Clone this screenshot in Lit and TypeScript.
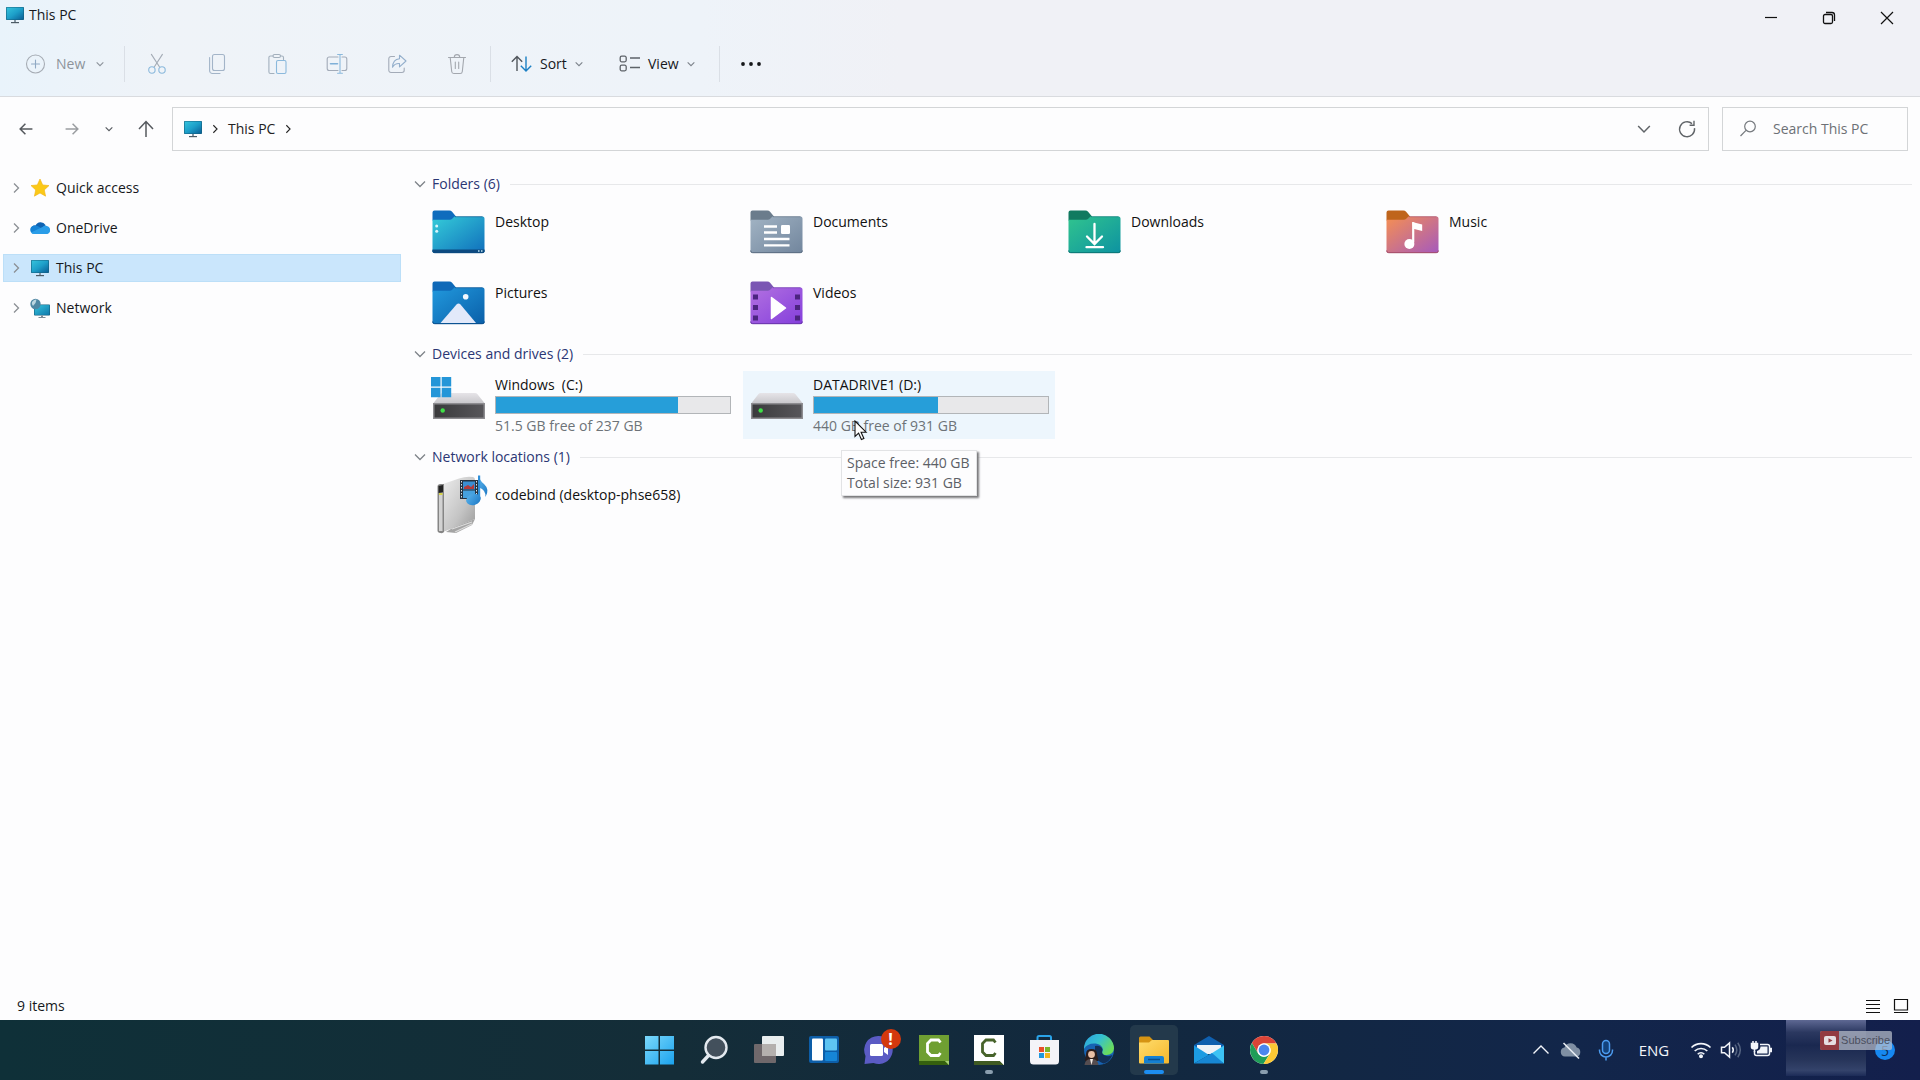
import { LitElement, html, svg, css, nothing, TemplateResult, SVGTemplateResult } from "lit";
import { customElement } from "lit/decorators.js";
import { classMap } from "lit/directives/class-map.js";
import { styleMap } from "lit/directives/style-map.js";

interface FolderItem {
  name: string;
  tab: string;
  from: string;
  to: string;
  edge: string;
  art: SVGTemplateResult;
}

interface Drive {
  name: string;
  free: string;
  total: string;
  used: number;
  system: boolean;
  hovered: boolean;
}

const monitor = (id: string) => html`
  <svg class="i20" viewBox="0 0 20 20" aria-hidden="true">
    <defs>
      <linearGradient id=${id} x1="0" y1="0" x2="1" y2="1">
        <stop offset="0" stop-color="#35c3dc" />
        <stop offset="0.5" stop-color="#1d9fc9" />
        <stop offset="1" stop-color="#0a5f96" />
      </linearGradient>
    </defs>
    <rect x="1" y="2" width="18" height="13" rx="0.8" fill="#14607f" />
    <rect x="1.6" y="2.6" width="16.8" height="11.8" rx="0.4" fill=${`url(#${id})`} />
    <path d="M9 15h2v2H9z" fill="#8796a2" />
    <path d="M6 17h8v1.2H6z" fill="#4d5b66" />
  </svg>
`;

const chevron = (d: string, cls: string) => html`
  <svg class=${cls} viewBox="0 0 12 12" fill="none" stroke="currentColor" stroke-width="1.3" aria-hidden="true">
    <path d=${d} />
  </svg>
`;
const DOWN = "M2 4l4 4 4-4";
const RIGHT = "M4 1.5l4.5 4.5L4 10.5";

const line = (body: SVGTemplateResult) => html`
  <svg class="i22" viewBox="0 0 22 22" fill="none" stroke="currentColor" stroke-width="1.1" stroke-linecap="round" stroke-linejoin="round" aria-hidden="true">${body}</svg>
`;

const editTools: { label: string; icon: SVGTemplateResult }[] = [
  {
    label: "Cut",
    icon: svg`<path d="M5.4 1.4l8 12.4M16.4 1.4l-8 12.4" stroke="#a3abb5"/><circle cx="5.9" cy="17" r="3.2" stroke="#8bb9dc"/><circle cx="16" cy="17" r="3.2" stroke="#8bb9dc"/>`,
  },
  {
    label: "Copy",
    icon: svg`<rect x="6.5" y="1.5" width="12" height="16" rx="2" stroke="#a3b4c8"/><path d="M3.6 4.5v13.2a2.8 2.8 0 0 0 2.8 2.8H14" stroke="#a3b4c8"/>`,
  },
  {
    label: "Paste",
    icon: svg`<path d="M8 20.5H4.5a1.6 1.6 0 0 1-1.6-1.6V4.6A1.6 1.6 0 0 1 4.5 3H7M14.5 3h1.4a1.6 1.6 0 0 1 1.6 1.6V6.5" stroke="#a3b0bd"/><rect x="7" y="1.5" width="7.5" height="3" rx="1.5" stroke="#a3b0bd"/><rect x="10.5" y="7.5" width="9.5" height="13" rx="1.5" stroke="#8bb9dc"/>`,
  },
  {
    label: "Rename",
    icon: svg`<path d="M12 4H3.2A2 2 0 0 0 1.2 6v9.5a2 2 0 0 0 2 2H12M16 4h2.8a2 2 0 0 1 2 2v9.5a2 2 0 0 1-2 2H16" stroke="#a3abb8"/><path d="M4.5 10.7h7" stroke="#7fb0d8" stroke-width="1.6"/><path d="M14 1.5v18.5M11.6 1.5h4.8M11.6 20.2h4.8" stroke="#8bb9dc"/>`,
  },
  {
    label: "Share",
    icon: svg`<path d="M8.5 3.5H5a2.2 2.2 0 0 0-2.2 2.2v11.6A2.2 2.2 0 0 0 5 19.5h11a2.2 2.2 0 0 0 2.2-2.2V15" stroke="#a3abb8"/><path d="M13.5 2.2l6.5 5.8-6.5 5.8v-3.3c-3.5-.2-5.6 1.2-7 3.7.2-4.8 2.8-8.1 7-8.5z" stroke="#93aecb"/>`,
  },
  {
    label: "Delete",
    icon: svg`<path d="M2.5 4.5h17M4.2 4.5l1.5 14a2.2 2.2 0 0 0 2.2 2h6.2a2.2 2.2 0 0 0 2.2-2l1.5-14M8.3 4.3a2.7 2.7 0 0 1 5.4 0M9.3 9v6.5M12.7 9v6.5" stroke="#a3a7ae"/>`,
  },
];

const folders: FolderItem[] = [
  {
    name: "Desktop", tab: "#0f6cbd", from: "#31c3d6", to: "#1273bd", edge: "#0b4f86",
    art: svg`<path d="M.5 39.5h52v1.5a2 2 0 0 1-2 2h-48a2 2 0 0 1-2-2z" fill="#0d4a80"/><circle cx="4.7" cy="16" r="1.5" fill="#d8f6fb"/><circle cx="4.7" cy="21.2" r="1.5" fill="#d8f6fb"/><path d="M46 41h1.5M49 41h1.5" stroke="#bfe6f5" stroke-width="1.5"/>`,
  },
  {
    name: "Documents", tab: "#6b7c8c", from: "#9dafc0", to: "#74889f", edge: "#5a6c80",
    art: svg`<path d="M14 16.5h13M14 22.5h13M14 29h25.5M14 35.3h25.5" stroke="#fff" stroke-width="2.3"/><rect x="31" y="15" width="9" height="9" rx="1.2" fill="#fff"/>`,
  },
  {
    name: "Downloads", tab: "#117a60", from: "#2dbf90", to: "#0f95a0", edge: "#0c7373",
    art: svg`<path d="M26.5 14v20M19 26.5l7.500 7.500 7.500-7.500M18.500 37.200H35" fill="none" stroke="#fff" stroke-width="2.3" stroke-linecap="round"/>`,
  },
  {
    name: "Music", tab: "#bf651c", from: "#ee8a5c", to: "#a95cb8", edge: "#a34d68",
    art: svg`<path d="M27.2 12.200v20" stroke="#fff" stroke-width="2.2"/><path d="M26.2 12l10 2.500v6.500l-9-2.300z" fill="#fff"/><circle cx="23.4" cy="34" r="5" fill="#fff"/>`,
  },
  {
    name: "Pictures", tab: "#0f69b8", from: "#1f93d8", to: "#0b62ab", edge: "#0a4d8a",
    art: svg`<path d="M8.5 42l16-18.500q2-2 4 0L44 42z" fill="#e2e9fa"/><circle cx="33.7" cy="15.7" r="2.8" fill="#f2f8ff"/>`,
  },
  {
    name: "Videos", tab: "#7a56b3", from: "#ae6ce0", to: "#8641dc", edge: "#6834a8",
    art: svg`<path d="M3 13.5h5v5H3zM3 24h5v5H3zM3 34.5h5v5H3zM45 13.5h5v5h-5zM45 24h5v5h-5zM45 34.5h5v5h-5z" fill="#4c2480"/><path d="M21.5 16.5l14 10.500-14 10.500z" fill="#fff" stroke="#fff" stroke-width="1.5" stroke-linejoin="round"/>`,
  },
];

const drives: Drive[] = [
  { name: "Windows\u00a0 (C:)", free: "51.5 GB", total: "237 GB", used: 77.8, system: true, hovered: false },
  { name: "DATADRIVE1 (D:)", free: "440 GB", total: "931 GB", used: 52.8, system: false, hovered: true },
];

const folderIcon = (f: FolderItem) => html`
  <svg class="folder" viewBox="0 0 53 44" aria-hidden="true">
    <defs>
      <linearGradient id=${"f" + f.name} x1="0" y1="0" x2="1" y2="1">
        <stop offset="0.1" stop-color=${f.from} />
        <stop offset="0.95" stop-color=${f.to} />
      </linearGradient>
    </defs>
    <path d="M.5 2.5a2 2 0 0 1 2-2h14.800q1.700 0 2.800 1.300L24 6.500v4H.5z" fill=${f.tab} />
    <path d="M.5 9.8h17.200q1.500 0 2.500-1L22.500 6.500h28a2 2 0 0 1 2 2V41a2 2 0 0 1-2 2h-48a2 2 0 0 1-2-2z" fill=${`url(#f${f.name})`} />
    <path d="M.7 40.500a2 2 0 0 0 2 2.200h47.600a2 2 0 0 0 2-2.200" fill="none" stroke=${f.edge} />
    <path d="M23 6.700h27.500" stroke=${f.edge} stroke-opacity="0.6" />
    ${f.art}
  </svg>
`;

const driveIcon = (system: boolean) => html`
  <svg class="drive-icon" viewBox="0 0 54 46" aria-hidden="true">
    <defs>
      <linearGradient id="dtop" x1="0" y1="0" x2="0" y2="1">
        <stop offset="0" stop-color="#e6e4e8" />
        <stop offset="1" stop-color="#c9c8cc" />
      </linearGradient>
      <linearGradient id="dfront" x1="0" y1="0" x2="1" y2="0">
        <stop offset="0" stop-color="#3a3a3c" />
        <stop offset="1" stop-color="#57565a" />
      </linearGradient>
    </defs>
    <path d="M11.5 17h32.500q1.500 0 2.300 1L53.500 27H2.500L9.500 18q.8-1 2-1z" fill="url(#dtop)" />
    <rect x="2" y="27" width="52" height="16" fill="#8d8c90" />
    <rect x="3.5" y="28.5" width="49" height="13" fill="url(#dfront)" />
    <circle cx="11.7" cy="34.5" r="2.2" fill="#3fe047" />
    ${system ? svg`<path d="M0 1h9.500v9.500H0zM10.700 1h9.500v9.500h-9.500zM0 11.700h9.500v9.500H0zM10.700 11.700h9.500v9.500h-9.500z" fill="#2496d8"/>` : nothing}
  </svg>
`;

const serverIcon = html`
  <svg class="server" viewBox="0 0 58 60" aria-hidden="true">
    <defs>
      <linearGradient id="srv" x1="0" y1="0" x2="1" y2="1">
        <stop offset="0" stop-color="#ececec" />
        <stop offset="0.6" stop-color="#c4c4c4" />
        <stop offset="1" stop-color="#999" />
      </linearGradient>
      <linearGradient id="note" x1="0" y1="0" x2="1" y2="1">
        <stop offset="0" stop-color="#5bb4ec" />
        <stop offset="1" stop-color="#1b77c4" />
      </linearGradient>
    </defs>
    <path d="M14 57l8-5 21-8-3 6-16 8z" fill="#a4a4a4" />
    <path d="M20 54l20-7M23 57l17-8" stroke="#dcdcdc" stroke-width="1.200" />
    <path d="M11 9L27 3.500q7-2.500 14-1.500 2 .5 2 3v39L11 57z" fill="url(#srv)" />
    <path d="M5.500 11.500q0-2.500 3-2.500h3.500v48q-1 1.500-3.500 1-3-.5-3-2.500z" fill="#858585" />
    <path d="M7 18h3.500v38H7z" fill="#d2d2d2" />
    <path d="M6.500 11l4.500-1v7l-4.500 1z" fill="#222" />
    <path d="M7 18h3.500v2H7z" fill="#d6d34a" />
    <rect x="28" y="5" width="18" height="19" fill="#25323f" />
    <rect x="31" y="6.500" width="12" height="8" fill="#3b8fd3" />
    <rect x="31" y="15.500" width="12" height="7.500" fill="#46a1de" />
    <path d="M32 12l4-2 3 2 3-3v5H32z" fill="#b43b3b" />
    <path d="M29.500 6v17M44.500 6v17" stroke="#d9e2ea" stroke-dasharray="1.500 1.500" />
    <path d="M47 1q.5 4.500 5 8 6 5.500 1.500 13 .5-7-6.500-9.500z" fill="url(#note)" />
    <path d="M46 .5h2.200v23H46z" fill="#2f8fd8" />
    <ellipse cx="41.500" cy="24.500" rx="7.500" ry="5.500" fill="url(#note)" transform="rotate(-18 41.500 24.500)" />
  </svg>
`;

const app = (body: SVGTemplateResult) => html`<svg class="i32" viewBox="0 0 32 32" aria-hidden="true">${body}</svg>`;

const camtasia = (bg: string, fg: string, strip: string, fold: string) => svg`
  <rect x="1" y="1" width="30" height="30" fill=${bg}/>
  <path d="M1 27h26l4 4H1z" fill=${strip}/>
  <path d="M27 27h4v4z" fill=${fold}/>
  <path d="M22.500 8.500L20.500 6H13L9.500 9.500v8.500l3.500 3.500h7.500l2-2.500" fill="none" stroke=${fg} stroke-width="2.800"/>`;

const taskApps: { label: string; active?: boolean; running?: boolean; art: SVGTemplateResult }[] = [
  {
    label: "Start",
    art: svg`<defs><linearGradient id="win" x1="0" y1="0" x2="1" y2="1"><stop offset="0" stop-color="#7bd8fb"/><stop offset="1" stop-color="#1ba3ee"/></linearGradient></defs><path d="M2 2h13.500v13.500H2zM17 2h14v13.500H17zM2 17h13.500v13.500H2zM17 17h14v13.500H17z" fill="url(#win)"/>`,
  },
  {
    label: "Search",
    art: svg`<circle cx="18" cy="13.500" r="10.500" fill="#43505c" stroke="#e3e9ef" stroke-width="2.400"/><path d="M10.500 21.500L4.500 28" stroke="#e3e9ef" stroke-width="3.400" stroke-linecap="round"/>`,
  },
  {
    label: "Task view",
    art: svg`<rect x="9" y="2" width="22" height="20" rx="1" fill="#e9eeef"/><rect x="1" y="10" width="22" height="19" rx="1" fill="#6f686b"/><rect x="9" y="10" width="14" height="12" fill="#b4b0ae"/>`,
  },
  {
    label: "Widgets",
    art: svg`<rect x="1" y="2" width="30" height="27" rx="2" fill="#0d5ea8"/><rect x="4" y="4.500" width="11" height="22" rx="1" fill="#fff"/><rect x="17" y="4.500" width="12" height="12" rx="1" fill="#5ec4f2"/><rect x="17" y="18" width="12" height="9" rx="1" fill="#1686d6"/>`,
  },
  {
    label: "Chat",
    art: svg`<path d="M15.500 2a14 14 0 1 1-5 27L1.500 30l1-8A14 14 0 0 1 15.500 2z" fill="#5b5bc4"/><rect x="7" y="10" width="13" height="12" rx="1.500" fill="#fff"/><path d="M21 14l4-3v10l-4-3z" fill="#fff"/>`,
  },
  { label: "Camtasia", art: camtasia("#6f9f32", "#fff", "#35600e", "#a6cf74") },
  { label: "Camtasia Recorder", running: true, art: camtasia("#fff", "#47632a", "#3f5a22", "#fff") },
  {
    label: "Microsoft Store",
    art: svg`<path d="M9.500 9V3.500q0-1.500 1.500-1.500h10.500q1.500 0 1.500 1.500V9" fill="none" stroke="#2aa3e8" stroke-width="2"/><path d="M2 6h29v21a3.500 3.500 0 0 1-3.500 3.500h-22A3.500 3.500 0 0 1 2 27z" fill="#f4f4f8"/><path d="M11 13h5v5h-5z" fill="#e8502b"/><path d="M17 13h5v5h-5z" fill="#7cb62c"/><path d="M11 19h5v5h-5z" fill="#2098dd"/><path d="M17 19h5v5h-5z" fill="#f3b51d"/>`,
  },
  {
    label: "Edge",
    art: svg`<defs><linearGradient id="edge" x1="0" y1="0" x2="1" y2="0.600"><stop offset="0" stop-color="#2b9fe2"/><stop offset="0.500" stop-color="#35c1d0"/><stop offset="1" stop-color="#6bdc5a"/></linearGradient></defs><circle cx="16" cy="16" r="15" fill="#1763b2"/><path d="M1 15A15 15 0 0 1 31 14.500q-.5 6.500-7.500 6.500c-3.500 0-5-1.500-4-3.500C21 13 17 9.500 11 9.500q-7 0-10 5.500z" fill="url(#edge)"/><path d="M12 12q6-1 7.500 3.500-2 5 4 6.500 3 .5 6-1-3 7-9 8.500-6-2-8.500-8z" fill="#123057"/><path d="M3 20q0-5 5.500-5t5.500 5l1.500 7H2z" fill="#2b1d1c"/><circle cx="8.500" cy="20.500" r="3.400" fill="#e8bfa6"/><path d="M1.500 31q.5-5 5-6l2 1.500 2-1.500q4.500 1 5 6z" fill="#554d50"/><path d="M7 25h3l-1.500 6z" fill="#f3ece6"/>`,
  },
  {
    label: "File Explorer",
    active: true,
    art: svg`<defs><linearGradient id="fx" x1="0" y1="0" x2="1" y2="1"><stop offset="0" stop-color="#ffdc6c"/><stop offset="1" stop-color="#f5b72c"/></linearGradient></defs><path d="M1 4q0-1.500 1.500-1.500h9L15 6v6H1z" fill="#d69413"/><path d="M1 8.500h10L14 6h16q1 0 1 1v21.500q0 1-1 1H2q-1 0-1-1z" fill="url(#fx)"/><path d="M6 29.500V24q0-2 2-2h16q2 0 2 2v5.500z" fill="#1580d2"/><path d="M10 25.500h12" stroke="#0b4f8c" stroke-width="1.500"/>`,
  },
  {
    label: "Mail",
    art: svg`<path d="M1 11L16 2l15 9v4H1z" fill="#0f5fae"/><path d="M4 11h24v9H4z" fill="#eef2f7"/><path d="M1 11.500l15 9.500L1 29.500z" fill="#1c9be2"/><path d="M31 11.500L16 21l15 8.500z" fill="#3cc3f4"/><path d="M1 29.500L19 19l12 10.500z" fill="#1787d4"/>`,
  },
  {
    label: "Chrome",
    running: true,
    art: svg`<circle cx="16" cy="16" r="14" fill="#fff"/><path d="M16 9.500h12.400A14 14 0 0 0 3.900 9L10 19.200A7 7 0 0 1 16 9.500z" fill="#db4437"/><path d="M3.900 9A14 14 0 0 0 15.500 30L21.800 19.800A7 7 0 0 1 10 19.200z" fill="#1f9d58"/><path d="M28.400 9.500H16a7 7 0 0 1 5.800 10.300L15.500 30A14 14 0 0 0 28.400 9.500z" fill="#fcc934"/><circle cx="16" cy="16" r="6.700" fill="#fff"/><circle cx="16" cy="16" r="5.400" fill="#4b86ee"/>`,
  },
];

@customElement("app-root")
export class AppRoot extends LitElement {
  static styles = css`
    :host {
      display: flex;
      flex-direction: column;
      min-height: 100vh;
      box-sizing: border-box;
      background: #fdfdfe;
      color: #16181c;
      font: 14px/20px "Open Sans", "Noto Sans", sans-serif;
    }
    * { box-sizing: border-box; }
    svg { display: block; flex: none; }
    button, input { font: inherit; color: inherit; border: 0; background: none; padding: 0; margin: 0; }
    a { color: inherit; text-decoration: none; }
    h1, h2 { margin: 0; font: inherit; }
    .i20 { width: 20px; height: 20px; }
    .i22 { width: 22px; height: 22px; }
    .i32 { width: 32px; height: 32px; }
    .c10 { width: 10px; height: 10px; }
    .c12 { width: 12px; height: 12px; }
    .c14 { width: 14px; height: 14px; }

    .chrome {
      background: linear-gradient(90deg, #e9f3fb 0, #eff3f8 160px, #eef3f9 700px, #f0f1f6 900px);
      border-bottom: 1px solid #d9dbdf;
    }
    .titlebar { display: flex; justify-content: space-between; height: 36px; }
    .title { display: flex; align-items: center; gap: 4px; height: 30px; padding-left: 5px; }
    .window { display: flex; padding-right: 4px; }
    .window button { width: 58px; display: grid; place-items: center; color: #111; }
    .toolbar { display: flex; align-items: center; height: 60px; padding: 0 0 5px 16px; }
    .tool { display: flex; align-items: center; height: 36px; }
    .new { gap: 10px; padding: 0 0 0 8px; width: 108px; color: #8d939b; }
    .edit { width: 60px; justify-content: center; }
    .rule { width: 1px; height: 36px; background: #dadfe6; }
    .edits { display: flex; padding: 0 3px 0 2px; }
    .sort { gap: 7px; width: 108px; padding-left: 20px; }
    .view { gap: 7px; width: 120px; padding-left: 20px; }
    .more { width: 62px; justify-content: center; }
    .muted { color: #7c828a; }

    .nav { display: flex; align-items: center; padding: 10px 12px 10px 3px; }
    .nav-btn { width: 46px; height: 36px; display: grid; place-items: center; color: #55595e; }
    .nav-btn.slim { width: 28px; }
    .nav-btn.dim { color: #9a9da1; }
    .address { flex: 1; display: flex; align-items: center; height: 44px; margin: 0 13px 0 3px; padding-left: 10px; border: 1px solid #d3d5d7; }
    .crumbs { flex: 1; display: flex; align-items: center; gap: 7px; color: #222; }
    .crumbs a { padding: 0 1px; }
    .address .end { width: 43px; height: 36px; display: grid; place-items: center; color: #606468; }
    .search { width: 186px; display: flex; align-items: center; gap: 15px; height: 44px; padding: 0 8px 0 15px; border: 1px solid #d3d5d7; color: #75797e; }
    .search input { flex: 1; min-width: 0; outline: 0; }
    .search input::placeholder { color: #6d7176; opacity: 1; }

    .body { flex: 1; display: grid; grid-template-columns: 404px 1fr; }
    .tree { padding: 13px 3px 0 3px; display: flex; flex-direction: column; gap: 12px; }
    .tree a { display: flex; align-items: center; height: 28px; padding-left: 6px; color: #16181c; border: 1px solid transparent; }
    .tree a.on { background: #cae6fc; border-color: #bcdff8; }
    .tree .c12 { color: #8b8f94; margin-right: 8px; }
    .tree .i20 { margin-right: 6px; }

    .content { padding: 9px 8px 0 10px; }
    .group { display: flex; align-items: center; gap: 6px; height: 28px; color: #2b3674; }
    .group .c12 { color: #7e8389; }
    .group::after { content: ""; flex: 1; height: 1px; margin-left: 4px; background: #e7e8ea; }
    .grid { display: grid; grid-template-columns: repeat(auto-fill, 312px); column-gap: 6px; padding-left: 11px; }
    .tiles { row-gap: 10px; padding-top: 10px; }
    .tile { display: flex; gap: 10px; min-height: 61px; padding: 2px 6px 0 7px; color: #111; }
    .tile span { padding-top: 2px; }
    .folder { width: 53px; height: 44px; }
    .drives { padding-top: 3px; padding-bottom: 4px; }
    .drive { position: relative; display: flex; gap: 10px; height: 68px; padding: 4px 6px 0 6px; color: #111; }
    .drive.hot { background: #edf6fd; }
    .drive-icon { width: 54px; height: 46px; margin-top: 1px; }
    .info { flex: 1; display: flex; flex-direction: column; }
    .bar { height: 18px; border: 1px solid #b2b5b8; background: #e8e8ea; margin: 1px 0 2px; }
    .fill { height: 100%; background: #269ed9; }
    .sub { color: #6d7378; }
    .server { width: 58px; height: 60px; margin: -8px -5px 0 0; }
    .tip {
      position: absolute; left: 98px; top: 79px; z-index: 2; padding: 2px 6px 2px 5px; white-space: nowrap;
      background: #fdfdfe; border: 1px solid #e2e3e5; color: #5c6066; box-shadow: 2px 2px 2px #77777a;
    }
    .cursor { position: absolute; left: 111px; top: 49px; width: 14px; height: 21px; z-index: 3; }

    .status { display: flex; justify-content: space-between; align-items: center; height: 28px; padding: 0 11px 0 17px; }
    .modes { display: flex; gap: 12px; }
    .modes svg { width: 16px; height: 16px; }

    .taskbar {
      display: grid; grid-template-columns: 1fr auto 1fr; align-items: center; height: 60px;
      background: linear-gradient(90deg, #0f3038 0, #142d38 35%, #12283f 60%, #12264a 82%, #131f4c 100%);
      color: #f2f5fa;
    }
    .apps { grid-column: 2; display: flex; gap: 7px; padding-left: 2px; }
    .app { position: relative; width: 48px; height: 50px; display: grid; place-items: center; border-radius: 5px; }
    .app.active { background: #23394b; }
    .app.active::after, .app.running::after {
      content: ""; position: absolute; bottom: 1px; left: 20px; width: 8px; height: 4px; border-radius: 2px; background: #8a9eae;
    }
    .app.active::after { left: 14px; width: 20px; background: #1d8df0; }
    .alert {
      position: absolute; right: 2px; top: 4px; width: 20px; height: 20px; border-radius: 50%;
      background: #d4380d; color: #fff; font-weight: 700; font-size: 16px; line-height: 20px; text-align: center;
    }
    .tray { grid-column: 3; justify-self: end; position: relative; display: flex; align-items: center; height: 60px; padding-right: 25px; }
    .tray-btn { width: 30px; height: 40px; display: grid; place-items: center; }
    .tray-btn.mic { width: 40px; }
    .lang { width: 60px; padding-right: 4px; font-size: 15px; text-align: center; }
    .blur {
      width: 80px; height: 56px; margin: 0 9px 4px 10px;
      background: linear-gradient(180deg, #5e6893 0, #2b3860 22%, #1a2850 45%, #263459 70%, #34436b 90%, #1c2b57 100%);
    }
    .badge { width: 20px; height: 20px; border-radius: 50%; background: #1688f2; color: #0c2c5c; text-align: center; line-height: 22px; }
    .subscribe {
      position: absolute; right: 28px; top: 11px; display: flex; align-items: center; height: 19px; border-radius: 2px; overflow: hidden;
      background: rgba(190, 195, 206, 0.7); color: #4b4f5e; font: 11px/19px "Liberation Sans", Arial, sans-serif; padding-right: 2px; gap: 2px;
    }
    .subscribe svg { width: 19px; height: 19px; background: #933a42; }
  `;

  private chromeBar(): TemplateResult {
    return html`
      <header class="chrome">
        <div class="titlebar">
          <h1 class="title">${monitor("m1")}<span>This PC</span></h1>
          <div class="window">
            <button aria-label="Minimize"><svg class="c14" viewBox="0 0 14 14" stroke="#111" stroke-width="1.2"><path d="M1 6.500h12" /></svg></button>
            <button aria-label="Restore"><svg class="c14" viewBox="0 0 14 14" fill="none" stroke="#111" stroke-width="1.3"><rect x="1.500" y="3.500" width="9" height="9" rx="1.500" /><path d="M4 1.500h6a2.500 2.500 0 0 1 2.500 2.500v6" /></svg></button>
            <button aria-label="Close"><svg class="c14" viewBox="0 0 14 14" stroke="#111" stroke-width="1.2"><path d="M1 1l12 12M13 1L1 13" /></svg></button>
          </div>
        </div>
        <div class="toolbar">
          <button class="tool new">
            ${line(svg`<circle cx="11.500" cy="11" r="9" stroke="#a6acb4"/><path d="M11.500 7v8M7.500 11h8" stroke="#8fa9c4"/>`)}
            <span>New</span>${chevron(DOWN, "c10")}
          </button>
          <span class="rule"></span>
          <div class="edits">
            ${editTools.map((t) => html`<button class="tool edit" aria-label=${t.label}>${line(t.icon)}</button>`)}
          </div>
          <span class="rule"></span>
          <button class="tool sort">
            <svg class="i22" viewBox="0 0 22 22" fill="none" stroke-width="1.400" aria-hidden="true">
              <path d="M6 18V3.500M.8 8.800L6 3.500l5.200 5.300" stroke="#50555c" />
              <path d="M15 3.500V18M9.800 12.800L15 18l5.200-5.200" stroke="#1b7fc4" />
            </svg>
            <span>Sort</span><span class="muted">${chevron(DOWN, "c10")}</span>
          </button>
          <button class="tool view">
            <svg class="i22" viewBox="0 0 22 22" fill="none" stroke="#5e6369" stroke-width="1.300" aria-hidden="true">
              <rect x="1.200" y="3.200" width="6" height="5.600" rx="1.500" /><rect x="1.200" y="12.200" width="6" height="5.600" rx="1.500" />
              <path d="M11 5h10M11 14.500h10" />
            </svg>
            <span>View</span><span class="muted">${chevron(DOWN, "c10")}</span>
          </button>
          <span class="rule"></span>
          <button class="tool more" aria-label="See more">
            <svg class="i22" viewBox="0 0 22 22" fill="#15171a"><circle cx="3" cy="11" r="1.900" /><circle cx="11" cy="11" r="1.900" /><circle cx="19" cy="11" r="1.900" /></svg>
          </button>
        </div>
      </header>
    `;
  }

  private navBar(): TemplateResult {
    return html`
      <nav class="nav" aria-label="Location">
        <button class="nav-btn" aria-label="Back">${chevron("M11.500 6H1M5.500 1.500L1 6l4.500 4.500", "c14")}</button>
        <button class="nav-btn dim" aria-label="Forward">${chevron("M.5 6H11M6.500 1.500L11 6l-4.500 4.500", "c14")}</button>
        <button class="nav-btn slim" aria-label="Recent locations">${chevron(DOWN, "c10")}</button>
        <button class="nav-btn" aria-label="Up">
          <svg class="i20" viewBox="0 0 20 20" fill="none" stroke="currentColor" stroke-width="1.500"><path d="M10 18V3M3 10l7-7.500 7 7.500" /></svg>
        </button>
        <div class="address">
          <div class="crumbs">${monitor("m2")}${chevron(RIGHT, "c10")}<a href="#this-pc">This PC</a>${chevron(RIGHT, "c10")}</div>
          <button class="end" aria-label="Previous locations">${chevron("M1 3.500l5 5 5-5", "c14")}</button>
          <button class="end" aria-label="Refresh">
            <svg class="i20" viewBox="0 0 20 20" fill="none" stroke="currentColor" stroke-width="1.400"><path d="M17.500 9.200A7.500 7.500 0 1 1 15 4.600M17 1.800v4.400h-4.400" /></svg>
          </button>
        </div>
        <label class="search">
          <svg class="i20" viewBox="0 0 20 20" fill="none" stroke="currentColor" stroke-width="1.200" aria-hidden="true"><circle cx="12" cy="7.500" r="5.300" /><path d="M8 11.300L2.500 17" /></svg>
          <input type="text" placeholder="Search This PC" aria-label="Search This PC" />
        </label>
      </nav>
    `;
  }

  private tree(): TemplateResult {
    const star = html`<svg class="i20" viewBox="0 0 20 20"><path d="M10 1l2.700 5.900 6.300.7-4.700 4.300 1.300 6.300L10 15l-5.600 3.200 1.300-6.300L1 7.600l6.300-.7z" fill="#fbc917" stroke="#f0b010" stroke-width=".6" /></svg>`;
    const cloud = html`<svg class="i20" viewBox="0 0 20 20"><path d="M5.500 7.500A5.600 5.600 0 0 1 15.500 7l-3 8H4a4 4 0 0 1-.5-7.500z" fill="#0f63b2" /><path d="M.2 12q0-4 4.300-4.500 2-.3 4 1l4 2.500L3 15.800Q.3 15 .2 12z" fill="#1583d6" /><path d="M12.500 9q2-2.500 4.500-1a4.200 4.200 0 0 1 .5 8H4q-2 0-3-1.500z" fill="#2a9de8" /></svg>`;
    const network = html`
      <svg class="i20" viewBox="0 0 20 20">
        <rect x="4" y="6.500" width="16" height="11" rx="0.800" fill="#14607f" />
        <rect x="4.600" y="7.100" width="14.800" height="9.800" fill="url(#m1n)" />
        <defs><linearGradient id="m1n" x1="0" y1="0" x2="1" y2="1"><stop offset="0" stop-color="#35c3dc" /><stop offset="1" stop-color="#0f79ac" /></linearGradient></defs>
        <path d="M11 17.500h2V19h-2zM8.500 19h7v1h-7z" fill="#7c8b96" />
        <circle cx="5.500" cy="6" r="5.200" fill="#4f87a3" /><path d="M2 4q2-3 4.500-2.500L5.500 5 3 8Q1.200 6.500 2 4z" fill="#bcd6e0" />
      </svg>`;
    const rows = [
      { name: "Quick access", icon: star, on: false },
      { name: "OneDrive", icon: cloud, on: false },
      { name: "This PC", icon: monitor("m3"), on: true },
      { name: "Network", icon: network, on: false },
    ];
    return html`
      <aside class="tree">
        ${rows.map((r) => html`<a href="#tree" class=${classMap({ on: r.on })}>${chevron(RIGHT, "c12")}${r.icon}<span>${r.name}</span></a>`)}
      </aside>
    `;
  }

  private group(label: string): TemplateResult {
    return html`<h2 class="group">${chevron("M1 3.500l5 5 5-5", "c12")}<span>${label}</span></h2>`;
  }

  private drive(d: Drive): TemplateResult {
    return html`
      <div class=${classMap({ drive: true, hot: d.hovered })}>
        ${driveIcon(d.system)}
        <div class="info">
          <a href="#drive">${d.name}</a>
          <div class="bar"><div class="fill" style=${styleMap({ width: `${d.used}%` })}></div></div>
          <span class="sub">${d.free} free of ${d.total}</span>
        </div>
        ${d.hovered
          ? html`
              <div class="tip" role="tooltip"><div>Space free: ${d.free}</div><div>Total size: ${d.total}</div></div>
              <svg class="cursor" viewBox="0 0 14 21"><path d="M1 1v15.500l3.600-3.400 2.800 6.400 2.500-1.100-2.800-6.200h5z" fill="#fff" stroke="#111" stroke-width="1.100" /></svg>
            `
          : nothing}
      </div>
    `;
  }

  private content(): TemplateResult {
    return html`
      <main class="content">
        ${this.group("Folders (6)")}
        <div class="grid tiles">
          ${folders.map((f) => html`<a class="tile" href="#folder">${folderIcon(f)}<span>${f.name}</span></a>`)}
        </div>
        ${this.group("Devices and drives (2)")}
        <div class="grid drives">${drives.map((d) => this.drive(d))}</div>
        ${this.group("Network locations (1)")}
        <div class="grid tiles"><a class="tile" href="#server">${serverIcon}<span>codebind (desktop-phse658)</span></a></div>
      </main>
    `;
  }

  private taskbar(): TemplateResult {
    return html`
      <footer class="taskbar">
        <div class="apps">
          ${taskApps.map(
            (a) => html`
              <button class=${classMap({ app: true, active: !!a.active, running: !!a.running })} aria-label=${a.label}>
                ${app(a.art)}${a.label === "Chat" ? html`<span class="alert">!</span>` : nothing}
              </button>
            `
          )}
        </div>
        <div class="tray">
          <button class="tray-btn" aria-label="Show hidden icons"><svg class="i20" viewBox="0 0 20 20" fill="none" stroke="#f2f5fa" stroke-width="1.400"><path d="M2.500 13.500L10 6l7.500 7.500" /></svg></button>
          <button class="tray-btn" aria-label="OneDrive status">
            <svg class="i22" viewBox="0 0 22 22"><path d="M5 17.500a4.600 4.600 0 0 1-.5-9.100 6.500 6.500 0 0 1 12.200.2 4.600 4.600 0 0 1 .3 8.900z" fill="#7f8fa3" /><path d="M3.500 4L19 19.500" stroke="#e8edf3" stroke-width="1.600" /></svg>
          </button>
          <button class="tray-btn mic" aria-label="Microphone">
            <svg class="i22" viewBox="0 0 22 22" fill="none" stroke="#4c9cf0" stroke-width="1.500"><rect x="7.500" y="1.500" width="7" height="13" rx="3.500" fill="#12427c" /><path d="M4.500 10.500v1a6.500 6.500 0 0 0 13 0v-1M11 18v3.500" /></svg>
          </button>
          <button class="lang">ENG</button>
          <button class="tray-btn" aria-label="Wi-Fi">
            <svg class="i22" viewBox="0 0 22 22" fill="none" stroke="#f2f5fa" stroke-width="1.600"><path d="M1.500 8.500a13.500 13.500 0 0 1 19 0M4.700 12a9 9 0 0 1 12.600 0M7.700 15.200a4.700 4.700 0 0 1 6.600 0" /><circle cx="11" cy="17.300" r="1.200" fill="#f2f5fa" /></svg>
          </button>
          <button class="tray-btn" aria-label="Volume">
            <svg class="i22" viewBox="0 0 22 22" fill="none" stroke="#f2f5fa" stroke-width="1.500"><path d="M1.500 8.300h3L9.500 4v14l-5-4.300h-3z" /><path d="M12.300 8.200q2 2.800 0 5.600" /><path d="M15 5.700q3.600 5.300 0 10.600M17.800 3.800q5 7.200 0 14.400" stroke="#566582" /></svg>
          </button>
          <button class="tray-btn" aria-label="Battery">
            <svg class="i22" viewBox="0 0 22 22" fill="none" stroke="#f2f5fa" stroke-width="1.500"><path d="M10 5.500h7.500a2 2 0 0 1 2 2v7a2 2 0 0 1-2 2H6.500a2 2 0 0 1-2-2V12" /><path d="M10.500 7.500h7v7H7v-2.500q3.500-1 3.500-4.500z" fill="#f2f5fa" stroke="none" /><path d="M20 9.500h1.500v3H20z" fill="#f2f5fa" /><path d="M1.500 4.500h6v3.500q0 2-3 2t-3-2zM3 4.500V2M6 4.500V2M4.500 10v3" fill="#f2f5fa" /></svg>
          </button>
          <span class="blur"></span>
          <span class="badge">5</span>
          <button class="subscribe">
            <svg viewBox="0 0 19 19"><rect x="4" y="5" width="12" height="9" rx="2" fill="#e6dde2" /><path d="M8.500 7.200l4 2.300-4 2.300z" fill="#933a42" /></svg>
            <span>Subscribe</span>
          </button>
        </div>
      </footer>
    `;
  }

  render() {
    return html`
      ${this.chromeBar()} ${this.navBar()}
      <div class="body">${this.tree()} ${this.content()}</div>
      <div class="status">
        <span>9 items</span>
        <div class="modes">
          <button aria-label="Details view"><svg viewBox="0 0 16 16" stroke="#111" stroke-width="1"><path d="M1 2.500h14M1 6.500h14M1 10.500h14M1 14.500h14" /></svg></button>
          <button aria-label="Large icons view"><svg viewBox="0 0 16 16" fill="none" stroke="#111" stroke-width="1.200"><path d="M1.500 1.500h13v10.500h-13zM1 14.500h14" /></svg></button>
        </div>
      </div>
      ${this.taskbar()}
    `;
  }
}
